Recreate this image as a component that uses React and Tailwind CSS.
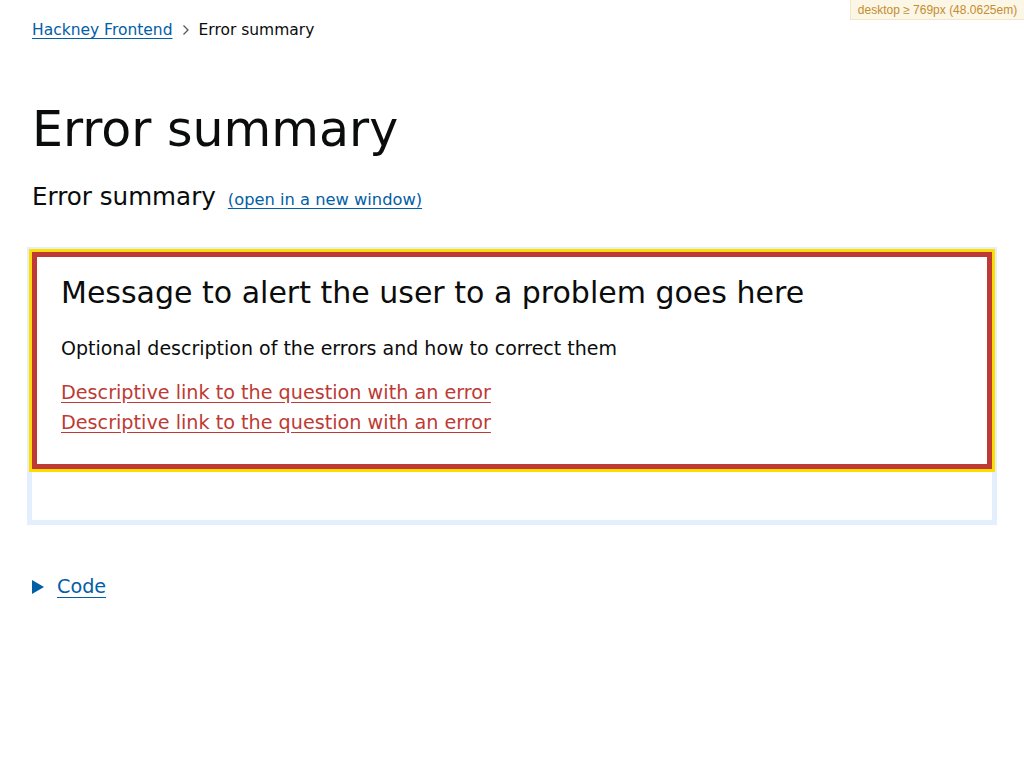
import React from 'react'

const font = { fontFamily: '"DejaVu Sans", "Open Sans", sans-serif' }

function Breadcrumbs() {
    return (
        <nav className="flex items-center text-[15.5px] leading-[20px] pt-[20px]">
            <a href="#" className="text-[#025ea6] underline underline-offset-[3px]">Hackney Frontend</a>
            <svg className="mx-[9px] w-[8px] h-[12px]" viewBox="0 0 8 12" fill="none">
                <path d="M1.5 1.5 L6 6 L1.5 10.5" stroke="#505a5f" strokeWidth="1.3" />
            </svg>
            <span className="text-[#0b0c0c]">Error summary</span>
        </nav>
    )
}

function ErrorSummary() {
    return (
        <div className="border-[5px] border-[#be3a34] outline-[3px] outline-solid outline-[#ffdd00] px-[24px] pt-[16px] pb-[26px]">
            <h2 className="text-[30px] leading-[40px] text-[#0b0c0c]">
                Message to alert the user to a problem goes here
            </h2>
            <p className="mt-[21px] text-[19px] leading-[28px] text-[#0b0c0c]">
                Optional description of the errors and how to correct them
            </p>
            <ul className="mt-[16px] text-[19.2px] leading-[30px]">
                <li>
                    <a href="#" className="text-[#be3a34] underline underline-offset-[3px]">Descriptive link to the question with an error</a>
                </li>
                <li>
                    <a href="#" className="text-[#be3a34] underline underline-offset-[3px]">Descriptive link to the question with an error</a>
                </li>
            </ul>
        </div>
    )
}

export default function App() {
    return (
        <div className="relative min-h-[768px] bg-white" style={font}>
            {/* breakpoint badge */}
            <div
                className="absolute top-0 right-0 w-[174px] h-[20px] bg-[#fcf6e6] border-l border-b border-[#f3e6c4] text-[#c48d2e] text-[12px] leading-[20px] text-center"
                style={{ fontFamily: '"Liberation Sans", Arial, sans-serif' }}
            >
                desktop ≥ 769px (48.0625em)
            </div>

            <div className="pl-[32px] pr-[27px]">
                <Breadcrumbs />

                <h1 className="mt-[60px] text-[49px] leading-[60px] text-[#0b0c0c]">Error summary</h1>

                <div className="mt-[22px] flex items-baseline">
                    <h2 className="text-[24.6px] leading-[30px] text-[#0b0c0c]">Error summary</h2>
                    <a href="#" className="ml-[12px] text-[16.3px] text-[#025ea6] underline underline-offset-[3px]">(open in a new window)</a>
                </div>

                {/* example frame */}
                <div className="mt-[35px] -ml-[5px] border-[5px] border-[#e3effc] pb-[51px]">
                    <ErrorSummary />
                </div>

                <div className="mt-[47px] flex items-center">
                    <svg className="w-[12px] h-[14px]" viewBox="0 0 12 14">
                        <path d="M0 0 L12 7 L0 14 Z" fill="#025ea6" />
                    </svg>
                    <a href="#" className="ml-[13px] text-[19.2px] leading-[30px] text-[#025ea6] underline underline-offset-[4px]">Code</a>
                </div>
            </div>
        </div>
    )
}
